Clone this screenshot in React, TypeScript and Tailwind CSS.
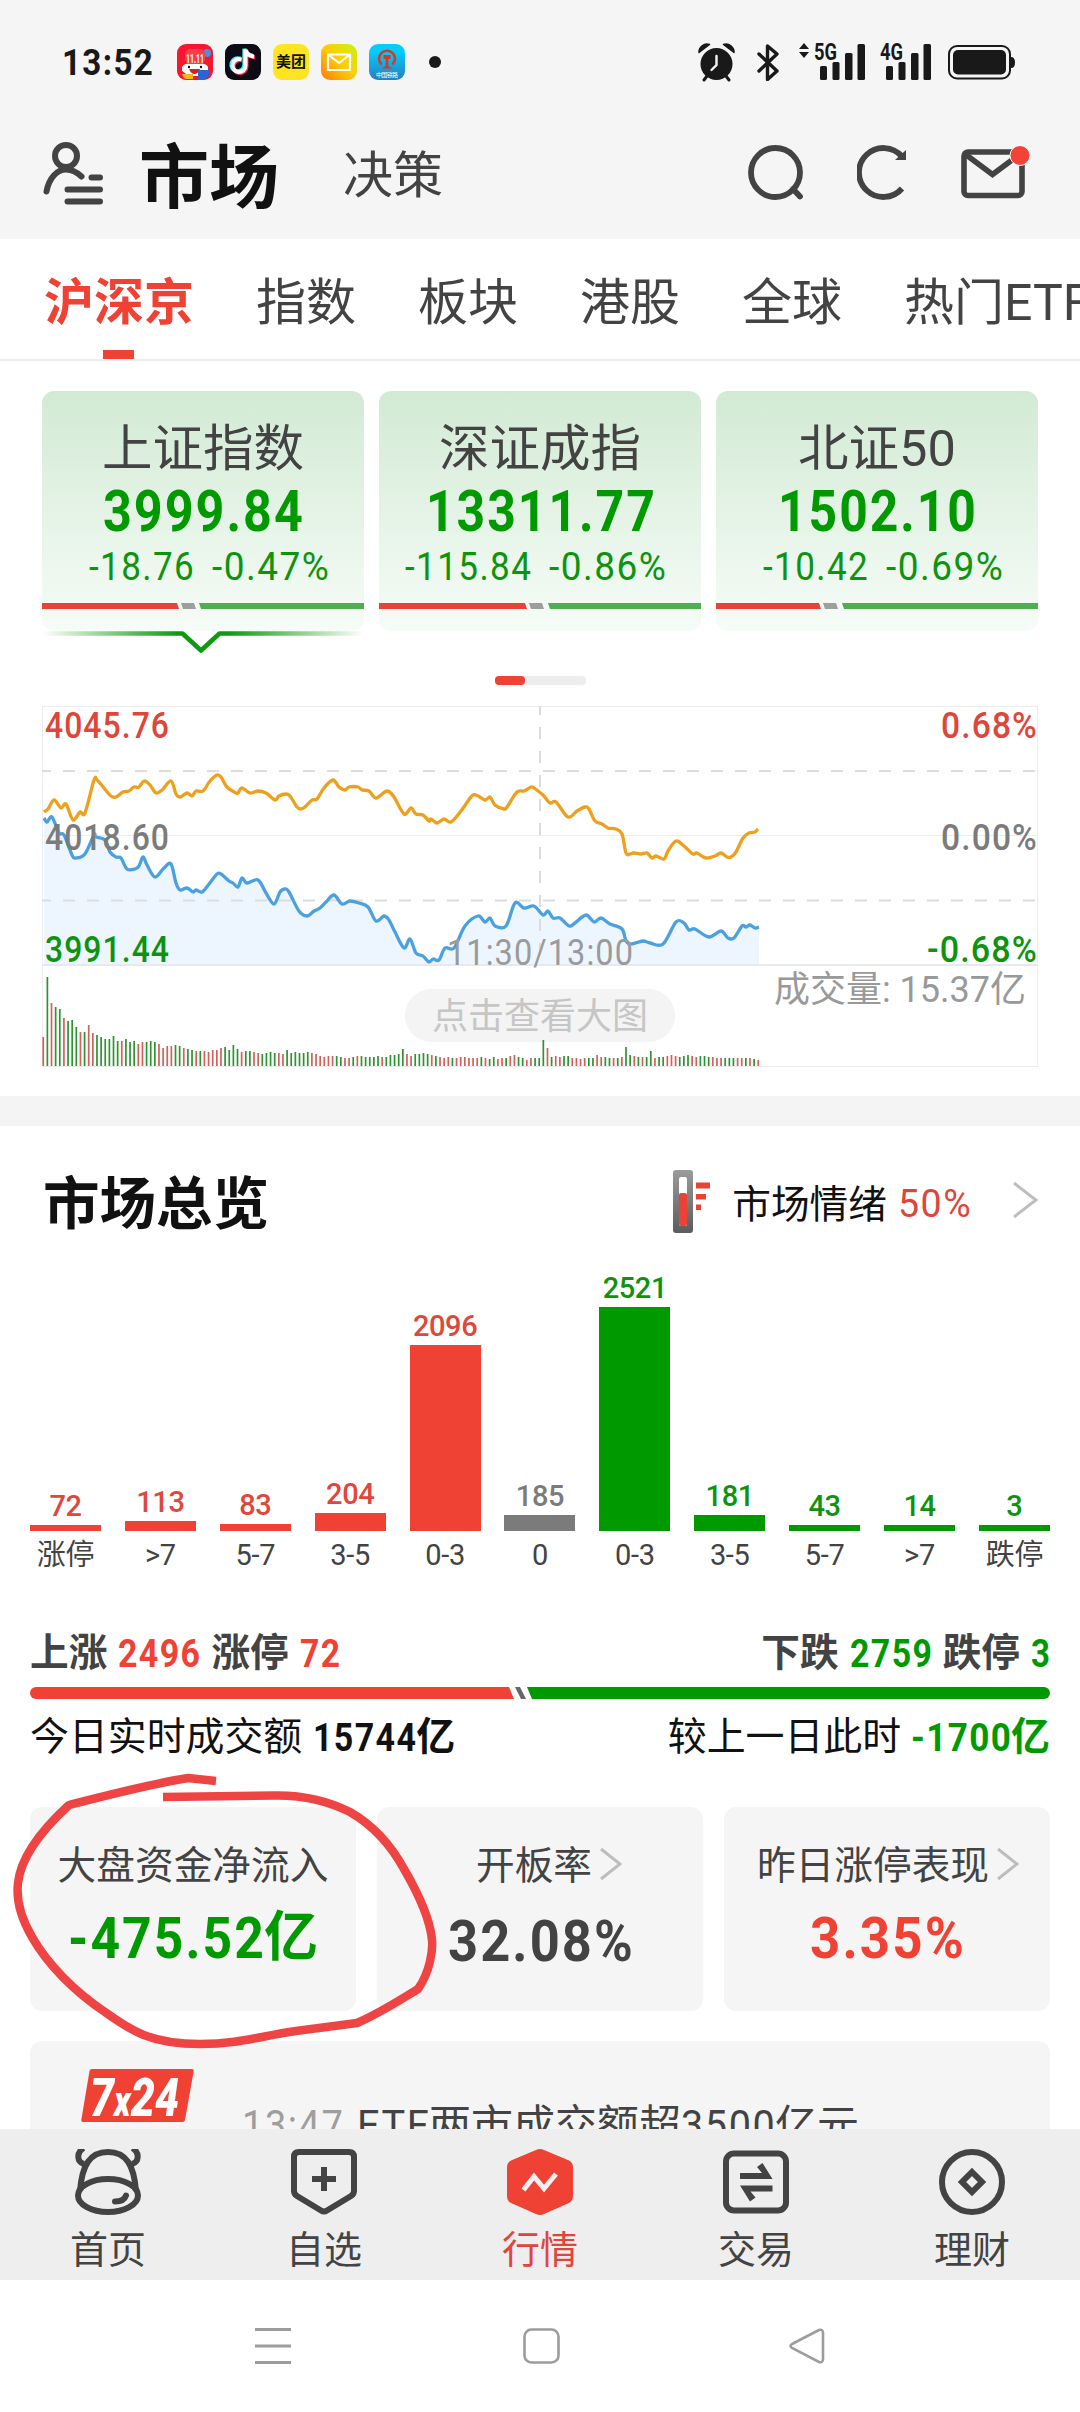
import type { ReactNode } from 'react'

type Point = [number, number]

const TABS = ['沪深京', '指数', '板块', '港股', '全球', '热门ETF']

const INDICES = [
  { name: '上证指数', value: '3999.84', valueW: 200, diff: '-18.76', diffW: 105, pct: '-0.47%', indent: 'pl-[47px]', up: 137, flat: 154, active: true },
  { name: '深证成指', value: '13311.77', valueW: 229, diff: '-115.84', diffW: 126, pct: '-0.86%', indent: 'pl-[26px]', up: 148, flat: 166, active: false },
  { name: '北证50', value: '1502.10', valueW: 198, diff: '-10.42', diffW: 105, pct: '-0.69%', indent: 'pl-[47px]', up: 105, flat: 123, active: false },
]

const AVG_LINE: Point[] = [
  [2, 106], [6, 103], [12, 94], [19, 102], [24, 98], [31, 114], [38, 106], [43, 107], [52, 74], [55, 74], [62, 82], [69, 90],
  [74, 91], [81, 86], [87, 85], [92, 81], [97, 81], [102, 75], [108, 79], [114, 87], [120, 84], [129, 75], [134, 88], [138, 91],
  [145, 87], [150, 90], [154, 85], [161, 85], [168, 75], [175, 69], [179, 71], [185, 81], [194, 87], [196, 87], [200, 82],
  [208, 87], [216, 85], [224, 87], [233, 94], [237, 90], [244, 88], [248, 90], [255, 101], [259, 103], [263, 101], [270, 94],
  [275, 93], [282, 82], [291, 74], [297, 81], [303, 84], [307, 81], [316, 81], [320, 84], [327, 85], [334, 92], [345, 85],
  [352, 91], [362, 108], [369, 102], [374, 108], [381, 109], [387, 115], [389, 113], [395, 117], [402, 113], [409, 116],
  [419, 105], [429, 91], [434, 89], [443, 94], [448, 91], [453, 99], [462, 103], [465, 101], [475, 86], [482, 85], [489, 81],
  [492, 82], [501, 89], [508, 97], [514, 96], [526, 111], [535, 105], [543, 101], [547, 103], [553, 115], [560, 118],
  [566, 122], [574, 123], [580, 128], [584, 147], [588, 148], [592, 147], [599, 148], [605, 147], [610, 152], [614, 150],
  [622, 153], [626, 145], [634, 135], [642, 140], [651, 148], [655, 147], [664, 152], [673, 150], [679, 147], [685, 151],
  [689, 151], [694, 146], [701, 132], [707, 127], [713, 126], [716, 123],
]

const PRICE_LINE: Point[] = [
  [2, 112], [5, 116], [10, 111], [17, 127], [22, 129], [30, 149], [34, 152], [43, 148], [52, 129], [54, 131], [63, 134],
  [68, 146], [74, 151], [79, 152], [85, 163], [93, 163], [97, 160], [101, 151], [105, 159], [113, 171], [122, 162], [129, 158],
  [134, 177], [138, 184], [145, 182], [151, 186], [154, 184], [160, 186], [167, 178], [175, 168], [179, 168], [187, 175],
  [191, 177], [196, 181], [200, 172], [205, 177], [216, 174], [224, 187], [232, 198], [238, 186], [243, 183], [247, 186],
  [257, 205], [265, 210], [272, 205], [278, 202], [284, 196], [292, 189], [300, 198], [308, 195], [317, 197], [326, 201],
  [334, 215], [342, 210], [347, 214], [353, 226], [362, 242], [368, 233], [374, 247], [381, 250], [387, 256], [391, 253],
  [397, 254], [403, 242], [412, 242], [423, 220], [436, 210], [443, 216], [448, 212], [453, 220], [464, 220], [473, 197],
  [482, 202], [492, 200], [501, 209], [506, 205], [511, 212], [518, 212], [527, 220], [533, 217], [544, 209], [552, 216],
  [559, 212], [568, 218], [580, 223], [584, 235], [589, 238], [601, 235], [608, 237], [621, 238], [634, 216], [642, 217],
  [647, 224], [653, 223], [667, 231], [679, 225], [686, 232], [692, 232], [700, 220], [704, 221], [708, 219], [713, 222],
  [717, 221],
]

// one entry per minute: colour letter + bar height
const VOLUME = (
  'R29 G89 R63 G59 G57 R48 G45 G46 G39 R34 G34 R41 R33 G31 G29 G27 G27 G30 G25 R25 G27 G24 G25 R22 R24 G24 G25 G24 R22 R18 ' +
  'R20 R20 G21 G20 R18 G17 G16 R15 G15 R15 R14 R16 R16 R18 G19 G16 G21 G17 R14 G15 G15 R14 R13 G12 G13 G14 G13 R13 R12 G16 ' +
  'G13 G14 G13 G13 G14 R13 R12 R10 R9 R10 R10 G10 G9 R8 R8 G9 R10 G10 G9 G9 G9 G10 R9 G9 G11 G11 G12 G17 R12 R10 G12 G12 ' +
  'G13 G12 R11 G10 R9 R8 R9 G8 R8 R9 R9 R8 R8 R8 G9 R8 G7 G9 R7 R8 G8 R10 R11 G9 G8 R6 R8 G8 G8 G26 R18 G9 R10 R9 G10 G10 ' +
  'R8 R8 R7 R8 G8 G8 R11 R9 G9 G8 R8 G8 R9 G19 G11 R10 G9 R9 G9 G15 R8 G9 G9 R10 R11 R10 G9 G10 G11 R10 R9 G10 G10 G9 R9 R8 ' +
  'R8 G8 G8 G8 R8 R8 G8 R8 G7 R6'
).split(' ')

const DISTRIBUTION = [
  { label: '涨停', count: 72, height: 6, bar: 'bg-[#ef4134]', text: 'text-[#e0473a]' },
  { label: '>7', count: 113, height: 10, bar: 'bg-[#ef4134]', text: 'text-[#e0473a]' },
  { label: '5-7', count: 83, height: 7, bar: 'bg-[#ef4134]', text: 'text-[#e0473a]' },
  { label: '3-5', count: 204, height: 18, bar: 'bg-[#ef4134]', text: 'text-[#e0473a]' },
  { label: '0-3', count: 2096, height: 186, bar: 'bg-[#ef4134]', text: 'text-[#e0473a]' },
  { label: '0', count: 185, height: 16, bar: 'bg-[#7b7b7b]', text: 'text-[#7b7b7b]' },
  { label: '0-3', count: 2521, height: 224, bar: 'bg-[#009900]', text: 'text-[#0d930d]' },
  { label: '3-5', count: 181, height: 16, bar: 'bg-[#009900]', text: 'text-[#0d930d]' },
  { label: '5-7', count: 43, height: 6, bar: 'bg-[#009900]', text: 'text-[#0d930d]' },
  { label: '>7', count: 14, height: 6, bar: 'bg-[#009900]', text: 'text-[#0d930d]' },
  { label: '跌停', count: 3, height: 6, bar: 'bg-[#009900]', text: 'text-[#0d930d]' },
]

function smooth(points: Point[]) {
  let d = `M${points[0][0]} ${points[0][1]}`
  for (let i = 0; i < points.length - 1; i++) {
    const p0 = points[i - 1] ?? points[i]
    const p1 = points[i]
    const p2 = points[i + 1]
    const p3 = points[i + 2] ?? p2
    d += `C${p1[0] + (p2[0] - p0[0]) / 6} ${p1[1] + (p2[1] - p0[1]) / 6} ${p2[0] - (p3[0] - p1[0]) / 6} ${p2[1] - (p3[1] - p1[1]) / 6} ${p2[0]} ${p2[1]}`
  }
  return d
}

// Figures are set narrower than the default digits, so each one carries its own width.
function Figure({ text, width, size, className = '' }: { text: string; width: number; size: number; className?: string }) {
  const h = Math.round(size * 0.6) * 2
  const gap = size * 0.04
  return (
    <svg width={width} height={h} className={`inline-block shrink-0 overflow-visible fill-current ${className}`}>
      <text
        x="0"
        y={h / 2 + size * 0.36}
        fontSize={size}
        letterSpacing={gap}
        textLength={width + gap * 0.8}
        lengthAdjust="spacingAndGlyphs"
      >
        {text}
      </text>
    </svg>
  )
}

function Signal({ label, arrows }: { label: string; arrows?: boolean }) {
  return (
    <svg width="66" height="38" viewBox="0 0 66 38" fill="#191919" className="overflow-visible">
      {arrows && <path d="M5 0l5 6H0zM5 15l5-6H0z" />}
      <text x="15" y="16.500" fontSize="23" fontWeight="700" textLength="23" lengthAdjust="spacingAndGlyphs">
        {label}
      </text>
      <rect x="21" y="23" width="7" height="14" rx="1.5" />
      <rect x="33.5" y="19" width="7" height="18" rx="1.5" />
      <rect x="46" y="10" width="7.5" height="27" rx="1.5" />
      <rect x="58.5" y="1" width="7.5" height="36" rx="1.5" />
    </svg>
  )
}

function StatusBar() {
  return (
    <div className="flex h-[124px] items-center pr-[64px] pl-[62px]">
      <Figure text="13:52" width={91} size={37} className="font-bold text-[#191919]" />
      <div className="ml-[24px] flex gap-3">
        <svg width="36" height="36" viewBox="0 0 36 36">
          <rect width="36" height="36" rx="9" fill="#f5162f" />
          <circle cx="30" cy="9" r="4" fill="#4a8fe0" />
          <path d="M5 23q1-4 13-4t13 4v5l-8 4H12l-7-5z" fill="#fff" />
          <rect x="8" y="5" width="20" height="15" rx="5" fill="#ff3a48" />
          <text x="9" y="19" fontSize="13" fontWeight="700" fill="#fff" textLength="18" lengthAdjust="spacingAndGlyphs">
            11.11
          </text>
          <circle cx="12" cy="23" r="1.2" fill="#111" />
          <circle cx="24" cy="23" r="1.2" fill="#111" />
          <path d="M12 25h11q-2 5-5.500 5T12 25z" fill="#d6201f" />
          <path d="M5 30h11v5H9q-3-1-4-5z" fill="#fbb615" />
          <path d="M21 26h11v5q-2 4-6 5h-5z" fill="#2a63d6" />
        </svg>
        <svg width="36" height="36" viewBox="0 0 36 36">
          <rect width="36" height="36" rx="9" fill="#0c0b16" />
          <g fill="none" strokeWidth="4">
            <path d="M16.500 15.500a6.500 6.500 0 1 0 4 6V5.500q1 6 8.500 7" transform="translate(-1.200 -.8)" stroke="#2ff0ec" />
            <path d="M16.500 15.500a6.500 6.500 0 1 0 4 6V5.500q1 6 8.500 7" transform="translate(1 1)" stroke="#fb3158" />
            <path d="M16.500 15.500a6.500 6.500 0 1 0 4 6V5.500q1 6 8.500 7" stroke="#fff" />
          </g>
        </svg>
        <div className="flex size-9 items-center justify-center rounded-[9px] bg-[#ffe41f] text-[15px] font-bold text-[#111]">
          美团
        </div>
        <svg width="36" height="36" viewBox="0 0 36 36">
          <linearGradient id="mail" x1="0" y1="1" x2="1" y2="0">
            <stop offset="0" stopColor="#ff7a0a" />
            <stop offset=".5" stopColor="#ffcb05" />
            <stop offset="1" stopColor="#c8f41a" />
          </linearGradient>
          <rect width="36" height="36" rx="9" fill="url(#mail)" />
          <path d="M7 10.500h22v15.500H7zL18 19 29 10.500" fill="none" stroke="#fff" strokeWidth="2.200" strokeLinejoin="round" />
        </svg>
        <svg width="36" height="36" viewBox="0 0 36 36">
          <linearGradient id="rail" x1="0" y1="0" x2="0" y2="1">
            <stop offset=".2" stopColor="#05cdfb" />
            <stop offset="1" stopColor="#237fc4" />
          </linearGradient>
          <rect width="36" height="36" rx="9" fill="url(#rail)" />
          <path d="M12.500 20.500a8 8 0 1 1 11 0" fill="none" stroke="#cf3a2b" strokeWidth="2.600" />
          <path d="M14.500 11h7v4h-2.200v7l4 2.500H12.700l4-2.500v-7h-2.200z" fill="#cf3a2b" />
          <text x="7" y="32.500" fontSize="6" fill="#fff" textLength="22">
            中国铁路
          </text>
        </svg>
      </div>
      <span className="ml-6 size-3 rounded-full bg-[#191919]" />
      <div className="ml-auto flex items-center">
        <svg width="37" height="39" viewBox="0 0 37 39" className="mr-[22px]">
          <circle cx="18.500" cy="21" r="16" fill="#191919" />
          <path d="M1 9.500A8 8 0 0 1 11.500 1.500zM36 9.500A8 8 0 0 0 25.500 1.500z" fill="#191919" stroke="#191919" strokeWidth="1.500" strokeLinejoin="round" />
          <path d="M9 33l-3 4M28 33l3 4" stroke="#191919" strokeWidth="3" strokeLinecap="round" />
          <path d="M18.500 13v9l-5 5" stroke="#f5f5f5" strokeWidth="2.400" fill="none" strokeLinecap="round" />
        </svg>
        <svg width="22" height="37" viewBox="0 0 22 37" className="mr-[20px]">
          <path d="M2 10l18 17-9.500 8.500V2L20 10 2 27" fill="none" stroke="#191919" strokeWidth="3.400" strokeLinejoin="round" strokeLinecap="round" />
        </svg>
        <Signal label="5G" arrows />
        <Signal label="4G" />
        <svg width="68" height="35" viewBox="0 0 68 35" className="ml-[17px]">
          <rect x="1" y="1" width="61" height="32.500" rx="8" fill="none" stroke="#191919" strokeWidth="2" />
          <rect x="5" y="5" width="53" height="24.500" rx="5" fill="#191919" />
          <path d="M63 12q4 0 4 5.500T63 23z" fill="#191919" />
        </svg>
      </div>
    </div>
  )
}

function Header() {
  return (
    <div className="flex h-[98px] items-center pr-[49px] pl-[43px]">
      <svg width="60" height="63" viewBox="0 0 60 63" fill="none" stroke="#434343" strokeWidth="6" strokeLinecap="round">
        <circle cx="23" cy="14" r="11" />
        <path d="M3.500 49.500C6 36 14 27.500 23 27.500q8 0 15.500 7" />
        <path d="M48.500 35.500H57M24.500 47.500H57M24.500 59.500H57" />
      </svg>
      <h1 className="ml-[36px] pt-[11px] text-[70px] leading-[80px] font-bold text-[#111]">市场</h1>
      <span className="ml-[64px] pt-[6px] text-[50px] leading-[60px] text-[#434343]">决策</span>
      <div className="ml-auto flex items-center text-[#434343]">
        <svg width="56" height="56" viewBox="0 0 56 56" fill="none" stroke="currentColor" strokeWidth="5.800">
          <circle cx="27.500" cy="27.500" r="24.500" />
          <path d="M45 44l7 7.500" strokeLinecap="round" />
        </svg>
        <svg width="50" height="56" viewBox="0 0 50 56" fill="none" stroke="currentColor" strokeWidth="5.800" className="ml-[53px]">
          <path d="M45 43.500A24.500 24.500 0 1 1 45 11.500" />
          <path d="M49 5v10H38z" fill="currentColor" stroke="none" />
        </svg>
        <svg width="71" height="56" viewBox="0 0 71 56" fill="none" stroke="currentColor" strokeWidth="5.600" className="ml-[53px]">
          <rect x="4" y="7" width="58" height="43.500" rx="4" />
          <path d="M5 9l27.500 20.500L60 9" />
          <circle cx="60" cy="10.500" r="10" fill="#f44336" stroke="#fff" strokeWidth="1" />
        </svg>
      </div>
    </div>
  )
}

function IndexCard({ index }: { index: (typeof INDICES)[number] }) {
  return (
    <div className="w-[322px]">
      <div className="flex h-[240px] flex-col items-center rounded-xl bg-linear-to-b from-[#d2ead4] to-[#f6fcf7] pt-[28px]">
        <div className="text-[50.5px] leading-[60px] text-[#434343]">{index.name}</div>
        <div className="mt-px flex h-[60px] items-center font-bold text-[#009900]">
          <Figure text={index.value} width={index.valueW} size={57.5} />
        </div>
        <div className={`flex h-[52px] w-full items-center gap-[18px] text-[#0d930d] ${index.indent}`}>
          <Figure text={index.diff} width={index.diffW} size={39} />
          <Figure text={index.pct} width={117} size={39} />
        </div>
        <svg width="322" height="6" className="mt-[11px]">
          <path d={`M0 0H${index.up - 2}l2 6H0z`} fill="#ea4335" />
          <path d={`M${index.up + 2} 0h13l2 6h-13z`} fill="#9e9e9e" />
          <path d={`M${index.flat + 3} 0H322V6H${index.flat + 5}z`} fill="#4faf50" />
        </svg>
      </div>
      {index.active && (
        <svg width="322" height="22">
          <linearGradient id="marker" gradientUnits="userSpaceOnUse" x1="0" y1="0" x2="322" y2="0">
            <stop offset="0" stopColor="#109910" stopOpacity="0" />
            <stop offset=".42" stopColor="#109910" />
            <stop offset=".58" stopColor="#109910" />
            <stop offset="1" stopColor="#109910" stopOpacity="0" />
          </linearGradient>
          <path d="M0 2.500H140.500L159 19.500 177.500 2.500H322" fill="none" stroke="url(#marker)" strokeWidth="4.600" strokeLinejoin="round" />
        </svg>
      )}
    </div>
  )
}

function MinuteChart() {
  return (
    <svg width="996" height="361" viewBox="0 0 996 361" className="mt-[21px] block">
      <path d={`${smooth(PRICE_LINE)}V259H2z`} fill="#edf6fe" />
      <g fill="none" stroke="#ededed">
        <rect x=".5" y=".5" width="995" height="360" />
        <path d="M0 129.500H996" />
        <path d="M0 259H996" strokeWidth="2" stroke="#e6eaee" />
      </g>
      <g fill="none" stroke="#dcdcdc" strokeWidth="2">
        <path d="M-3 65H996M-3 194.500H996" strokeDasharray="12 12" />
        <path d="M498 -3V259" strokeDasharray="12 12" />
      </g>
      <path d={smooth(PRICE_LINE)} fill="none" stroke="#4ba1e0" strokeWidth="3.300" />
      <path d={smooth(AVG_LINE)} fill="none" stroke="#ee9f1c" strokeWidth="3.300" />
      <g fontSize="36.500" letterSpacing="1.200" fontWeight="500">
        <text x="3" y="32" textLength="125" lengthAdjust="spacingAndGlyphs" fill="#de463a">4045.76</text>
        <text x="3" y="144" textLength="125" lengthAdjust="spacingAndGlyphs" fill="#7b7b7b">4018.60</text>
        <text x="3" y="256" textLength="125" lengthAdjust="spacingAndGlyphs" fill="#0d930d">3991.44</text>
        <text x="899" y="32" textLength="97" lengthAdjust="spacingAndGlyphs" fill="#de463a">0.68%</text>
        <text x="899" y="144" textLength="97" lengthAdjust="spacingAndGlyphs" fill="#7b7b7b">0.00%</text>
        <text x="885" y="256" textLength="111" lengthAdjust="spacingAndGlyphs" fill="#0d930d">-0.68%</text>
        <text x="405" y="259" textLength="187" lengthAdjust="spacingAndGlyphs" fill="#9a9a9a" fontWeight="400">11:30/13:00</text>
      </g>
      <text x="732" y="296" fontSize="36" fill="#999" textLength="252" lengthAdjust="spacingAndGlyphs">成交量: 15.37亿</text>
      <rect x="363" y="283" width="270" height="53" rx="26.500" fill="#f4f4f4" />
      <text x="390" y="323" fontSize="36" fill="#c6c6c6">点击查看大图</text>
      {VOLUME.map((v, i) => {
        const h = Number(v.slice(1))
        return (
          <rect
            key={i}
            x={0.4 + i * 4.133}
            y={360 - h}
            width="1.700"
            height={h}
            fill={v[0] === 'R' ? '#d4605a' : '#2c9430'}
          />
        )
      })}
    </svg>
  )
}

function Chevron({ width, height, className = '' }: { width: number; height: number; className?: string }) {
  return (
    <svg width={width} height={height} className={className}>
      <path d={`M2 2L${width - 2} ${height / 2}L2 ${height - 2}`} fill="none" stroke="#bdbdbd" strokeWidth="3" />
    </svg>
  )
}

function Overview() {
  return (
    <section className="px-[30px]">
      <div className="flex h-[108px] items-center pt-[50px] pr-3 pl-[13px]">
        <h2 className="text-[56.5px] leading-[58px] font-bold text-[#111]">市场总览</h2>
        <svg width="38" height="64" viewBox="0 0 38 64" className="mb-[6px] ml-auto">
          <linearGradient id="thermo" x1="0" y1="0" x2="0" y2="1">
            <stop offset="0" stopColor="#9b9b9b" />
            <stop offset="1" stopColor="#5c5c5c" />
          </linearGradient>
          <rect width="20" height="63" rx="3" fill="url(#thermo)" />
          <rect x="6" y="7" width="8" height="49" rx="2" fill="#fff" />
          <rect x="6" y="23" width="8" height="33" rx="2" fill="#ea4335" />
          <path d="M23 12.500h14v6H23zM23 24h10v5.500H23zM23 34.500h5v5.500h-5z" fill="#ea4335" />
        </svg>
        <span className="ml-[21px] text-[38.700px] leading-[58px] text-[#111]">市场情绪</span>
        <Figure text="50%" width={73} size={39} className="mb-[5px] ml-[11px] text-[#de463a]" />
        <Chevron width={26} height={38} className="mb-[10px] ml-[41px]" />
      </div>

      <div className="flex justify-between">
        {DISTRIBUTION.map((d, i) => (
          <div key={i} className="flex w-[71px] flex-col items-center">
            <div className="flex h-[297px] w-full flex-col items-center justify-end">
              <div className={`mb-[3px] text-[29px] leading-[31px] font-medium tracking-[-0.4px] ${d.text}`}>{d.count}</div>
              <div className={`w-full ${d.bar}`} style={{ height: d.height }} />
            </div>
            <div className="mt-[6px] text-[29px] leading-9 tracking-[-0.3px] text-[#434343]">{d.label}</div>
          </div>
        ))}
      </div>

      <div className="mt-[60px] flex h-10 justify-between text-[38.700px] leading-10 font-bold text-[#434343]">
        <div className="flex items-center">
          上涨
          <Figure text="2496" width={82} size={39.5} className="mx-[11px] text-[#ef4134]" />
          涨停
          <Figure text="72" width={40} size={39.5} className="ml-[11px] text-[#ef4134]" />
        </div>
        <div className="flex items-center">
          下跌
          <Figure text="2759" width={82} size={39.5} className="mx-[11px] text-[#009900]" />
          跌停
          <Figure text="3" width={19} size={39.5} className="ml-[11px] text-[#009900]" />
        </div>
      </div>
      <svg width="1020" height="12" className="mt-[14px] block">
        <path d="M6 0H479l5 12H6A6 6 0 0 1 6 0z" fill="#ef4134" />
        <path d="M485 0h5l6 12h-5z" fill="#666" />
        <path d="M497 0H1014a6 6 0 0 1 0 12H502z" fill="#009900" />
      </svg>
      <div className="mt-[18px] flex h-10 justify-between text-[38.900px] leading-10 text-[#111]">
        <div className="flex items-center">
          今日实时成交额
          <span className="ml-[11px] flex items-center font-bold">
            <Figure text="15744" width={103} size={39.5} />亿
          </span>
        </div>
        <div className="flex items-center">
          较上一日此时
          <span className="ml-[10px] flex items-center font-bold text-[#009900]">
            <Figure text="-1700" width={100} size={39.5} />亿
          </span>
        </div>
      </div>

      <div className="mt-[50px] grid grid-cols-3 gap-[21px]">
        <Stat label="大盘资金净流入">
          <div className="flex items-center text-[#009900]">
            <Figure text="-475.52" width={196} size={57.5} />
            <span className="pt-[2px] text-[54px] leading-[60px]">亿</span>
          </div>
        </Stat>
        <Stat label="开板率" link className="pl-[18px]">
          <Figure text="32.08%" width={185} size={57.5} className="mt-[6px] text-[#434343]" />
        </Stat>
        <Stat label="昨日涨停表现" link className="pl-[2px]">
          <Figure text="3.35%" width={154} size={57.5} className="text-[#ef4134]" />
        </Stat>
      </div>
    </section>
  )
}

function Stat({ label, link, className = '', children }: { label: string; link?: boolean; className?: string; children: ReactNode }) {
  return (
    <div className="flex h-[204px] flex-col items-center rounded-xl bg-[#f5f5f5] pt-[39px]">
      <div className={`flex items-center text-[38.700px] leading-10 text-[#434343] ${className}`}>
        {label}
        {link && <Chevron width={23} height={34} className="mb-1 ml-[7px]" />}
      </div>
      <div className="mt-[21px] flex h-[60px] items-center font-bold">{children}</div>
    </div>
  )
}

function News() {
  return (
    <div className="mx-[30px] mt-[30px] flex h-[160px] rounded-t-xl bg-[#f5f5f5] pt-7 pl-[51px]">
      <svg width="113" height="54" viewBox="0 0 113 54" className="overflow-visible">
        <path d="M11 0H111q2 0 1.700 2L104 51q-.5 2-2.500 2H2Q0 53 .3 51L8.500 2Q9 0 11 0z" fill="#ef4134" />
        <text x="9" y="47" fontSize="54" fontWeight="900" fontStyle="italic" fill="#fff" textLength="89" lengthAdjust="spacingAndGlyphs">
          7<tspan fontSize="42">x</tspan>24
        </text>
      </svg>
      <div className="mt-[28px] ml-[48px] flex h-14 items-center text-[42px] whitespace-nowrap text-[#434343]">
        <Figure text="13:47" width={101} size={42} className="mr-[14px] text-[#9e9e9e]" />
        <Figure text="ETF" width={72} size={42} />
        两市成交额超
        <Figure text="3500" width={94} size={42} />
        亿元
      </div>
    </div>
  )
}

function NavItem({ label, active, children }: { label: string; active?: boolean; children: ReactNode }) {
  return (
    <div className={`flex w-[216px] flex-col items-center pt-5 ${active ? 'text-[#e0443a]' : 'text-[#434343]'}`}>
      <svg width="66" height="66" viewBox="0 0 66 66" fill="none" stroke="currentColor" strokeWidth="6">
        {children}
      </svg>
      <span className="mt-[13px] text-[38px] leading-[44px]">{label}</span>
    </div>
  )
}

function BottomNav() {
  return (
    <nav className="flex h-[151px] shrink-0 bg-[#eee]">
      <NavItem label="首页">
        <path d="M5 42C7 16 15 3 33 3s26 13 28 39" />
        <ellipse cx="33" cy="46.500" rx="30" ry="16.500" />
        <path d="M8.500-1C1 4 2 13 9 15M57.500-1C65 4 64 13 57 15" />
        <path d="M40 52.500q9 0 11-6" strokeLinecap="round" />
      </NavItem>
      <NavItem label="自选">
        <path d="M8 3H58q5 0 5 5V42q0 3-3 5L36 61.500q-3 2-6 0L6 47q-3-2-3-5V8q0-5 5-5z" />
        <path d="M33 18V42M21 30H45" />
      </NavItem>
      <NavItem label="行情" active>
        <path
          d="M29 1q4-2 8 0L62 11.500q4 2 4 7V47q0 5-4 7L37 65q-4 2-8 0L4 54q-4-2-4-7V18.500q0-5 4-7z"
          fill="#ef4134"
          stroke="none"
        />
        <path d="M16.500 41L27 27.500 37 39.500 49 25" stroke="#f5eeee" strokeWidth="5" />
      </NavItem>
      <NavItem label="交易">
        <rect x="3" y="4.500" width="60" height="57" rx="8" />
        <path d="M17 24H39L34 18 39.500 14 49.500 30H17zM49.500 42.500H27.500l5 6L27 52.500 17 36.500H49.500z" fill="currentColor" stroke="none" />
      </NavItem>
      <NavItem label="理财">
        <circle cx="33" cy="33" r="30" />
        <path d="M33 23L43 33 33 43 23 33z" />
      </NavItem>
    </nav>
  )
}

function SystemNav() {
  return (
    <div className="flex h-[132px] shrink-0 items-center bg-white pl-[255px]">
      <svg width="570" height="38" viewBox="0 0 570 38" fill="none" stroke="#9c9c9c" strokeWidth="3">
        <path d="M0 2.500H36M0 19H36M0 35.500H36" />
        <rect x="269.500" y="2.500" width="34" height="33" rx="7" strokeWidth="2.600" />
        <path d="M537 17L564 3q4-1 4 3V32q0 4-4 3L537 21q-3-2 0-4z" strokeWidth="2.600" />
      </svg>
    </div>
  )
}

export default function App() {
  return (
    <div className="relative flex h-[2412px] w-[1080px] flex-col overflow-hidden bg-white font-['Roboto','Noto_Sans_CJK_SC',sans-serif]">
      <header className="h-[239px] shrink-0 bg-[#f5f5f5]">
        <StatusBar />
        <Header />
      </header>

      <main className="min-h-0 flex-1 overflow-hidden">
        <div className="flex h-[122px] gap-[62px] overflow-hidden border-b-2 border-[#ededed] pl-11 text-[50px] whitespace-nowrap text-[#434343]">
          {TABS.map((tab, i) => (
            <div
              key={tab}
              className={`relative shrink-0 pt-[34px] leading-[60px] ${i === 0 ? 'font-bold text-[#ef4134]' : ''}`}
            >
              {tab}
              {i === 0 && <span className="absolute bottom-0 left-[59px] h-[9px] w-[31px] bg-[#ef4134]" />}
            </div>
          ))}
        </div>

        <section className="px-[42px] pt-[30px] pb-[29px]">
          <div className="flex h-[262px] gap-[15px]">
            {INDICES.map((index) => (
              <IndexCard key={index.name} index={index} />
            ))}
          </div>
          <div className="mx-auto mt-[23px] h-[9px] w-[91px] rounded-sm bg-[#ededed]">
            <div className="h-full w-[30px] rounded-sm bg-[#ef4134]" />
          </div>
          <MinuteChart />
        </section>

        <div className="h-[30px] bg-[#f4f4f4]" />
        <Overview />
        <News />
      </main>

      <BottomNav />
      <SystemNav />

      {/* hand-drawn circle around the net inflow card */}
      <svg
        width="450"
        height="290"
        viewBox="0 1770 450 290"
        className="pointer-events-none absolute top-[1770px] left-0"
        fill="none"
        stroke="#ee4444"
        strokeWidth="8.500"
        strokeLinejoin="round"
      >
        <path d="M216 1781L188 1778C150 1784 100 1797 69 1805C45 1827 21 1855 18 1883C16 1900 22 1920 32 1937C48 1965 75 1992 105 2012C130 2030 150 2044 200 2044C240 2044 260 2036 296 2031L357 2023C380 2013 400 2000 418 1989C430 1972 433 1950 432 1940C430 1918 418 1893 404 1869C392 1847 376 1827 350 1812C330 1802 305 1795 275 1795.500L163 1797" />
      </svg>
    </div>
  )
}
